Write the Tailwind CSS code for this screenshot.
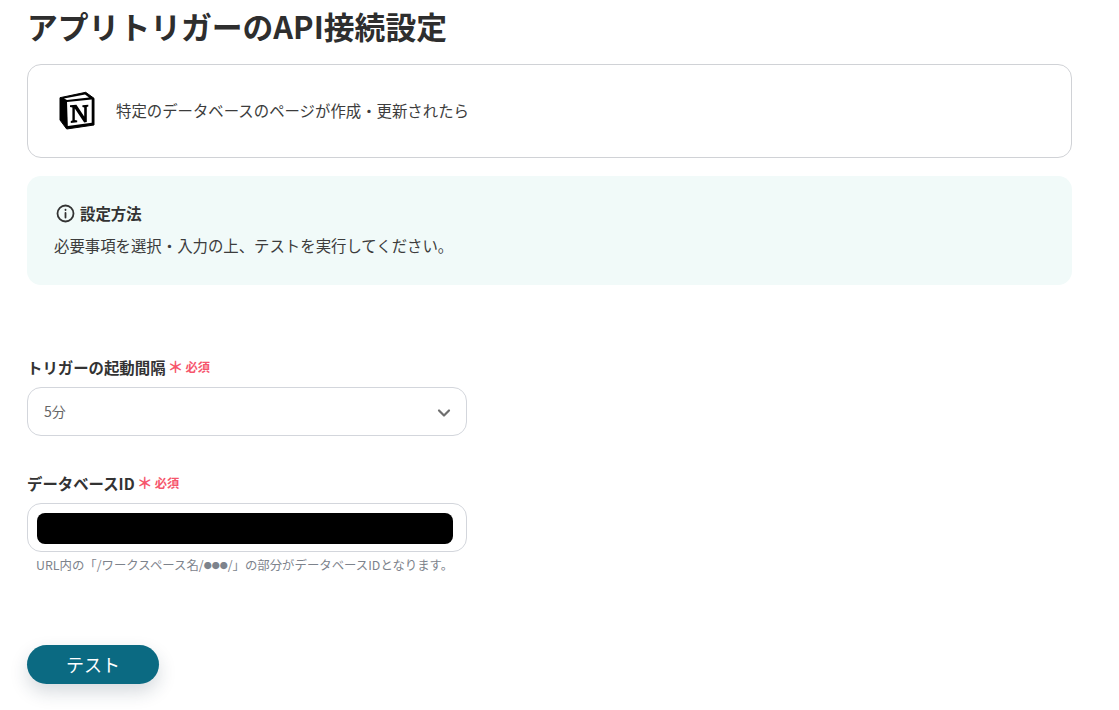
<!DOCTYPE html>
<html lang="ja">

<head>
    <meta charset="UTF-8">
    <title>アプリトリガーのAPI接続設定</title>
    <script src="https://cdn.jsdelivr.net/npm/@tailwindcss/browser@4"></script>
</head>

<body class="bg-white overflow-hidden font-['Noto_Sans_CJK_JP','Noto_Sans',sans-serif] text-[#333]">
    <div class="h-[710px] w-[1119px] overflow-hidden pl-[27px]">
        <h1 class="h-[56px] pt-[4px] text-[30.8px] leading-[44px] font-bold text-[#2e2e2e]">アプリトリガーのAPI接続設定</h1>

        <!-- trigger card -->
        <div class="mt-[8px] flex h-[94px] w-[1045px] items-center rounded-[14px] border border-[#d0d2d6] pl-[31px]">
            <svg class="h-[40px] w-[37px] shrink-0" viewBox="0 0 37 40">
                <path d="M1 6.7 L26.7 1.3 L35 7.3 V34 L7.7 38 L1 29 Z" fill="#000" stroke="#000" stroke-width="1" stroke-linejoin="round"/>
                <path d="M5 7.5 L26 3.6 L30 6.6 L8 9 Z" fill="#fff"/>
                <path d="M8 10.9 L32.7 8.6 V31.7 L8.8 35 Z" fill="#fff"/>
                <path d="M11 14.2 L17.4 13.8 L25.2 25.4 V16.4 L23.4 16 V14.2 L29.3 13.7 V15.5 L27.8 15.9 V31 L25.2 31.4 L15.8 17.6 V28.9 L18.2 29.5 V31.3 L11.8 31.9 V30.1 L13.4 29.5 V16.4 L11 16 Z" fill="#000"/>
            </svg>
            <p class="ml-[20px] -mt-[2px] text-[15.4px] leading-[22px] text-[#3c3c3c]">特定のデータベースのページが作成・更新されたら</p>
        </div>

        <!-- how to -->
        <div class="mt-[18px] h-[109px] w-[1045px] rounded-[14px] bg-[#f1faf9] pl-[27px] pt-[26px]">
            <div class="flex h-[22px] items-center">
                <svg class="ml-[2px] h-[19px] w-[19px]" viewBox="0 0 19 19" fill="none" stroke="#333" stroke-width="1.8" stroke-linecap="round">
                    <circle cx="9.5" cy="9.5" r="8"/>
                    <path d="M9.5 9v4.5"/>
                    <path d="M9.5 5.6v.4"/>
                </svg>
                <span class="ml-[5px] text-[15.4px] leading-[22px] font-bold text-[#333]">設定方法</span>
            </div>
            <p class="mt-[10px] text-[15.4px] leading-[22px] text-[#3c3c3c]">必要事項を選択・入力の上、テストを実行してください。</p>
        </div>

        <!-- interval -->
        <div class="mt-[70px] flex h-[24px] items-center">
            <span class="text-[15.4px] leading-[24px] font-bold text-[#333]">トリガーの起動間隔</span>
            <span class="ml-[2px] text-[12.3px] leading-[24px] font-bold text-[#f6566c]"><span class="mr-[2px] inline-block align-[-1px] text-[16px] leading-[16px]">＊</span>必須</span>
        </div>
        <div class="mt-[8px] flex h-[49px] w-[440px] items-center justify-between rounded-[14px] border border-[#d3d6dc] pl-[16px] pr-[15px]">
            <span class="-mt-[2px] text-[14px] leading-[20px] text-[#666]">5分</span>
            <svg class="mt-[2px] h-[12px] w-[14px]" viewBox="0 0 14 12" fill="none" stroke="#6f6f6f" stroke-width="2.2" stroke-linecap="round" stroke-linejoin="round">
                <path d="M2 3.5 L7 8.5 L12 3.5"/>
            </svg>
        </div>

        <!-- database id -->
        <div class="mt-[35px] flex h-[24px] items-center">
            <span class="text-[15.4px] leading-[24px] font-bold text-[#333]">データベースID</span>
            <span class="ml-[2px] text-[12.3px] leading-[24px] font-bold text-[#f6566c]"><span class="mr-[2px] inline-block align-[-1px] text-[16px] leading-[16px]">＊</span>必須</span>
        </div>
        <div class="mt-[8px] flex h-[49px] w-[440px] items-center rounded-[14px] border border-[#d3d6dc] pl-[9px]">
            <div class="mt-[2px] h-[31px] w-[416px] rounded-[8px] bg-black"></div>
        </div>
        <p class="mt-[4px] pl-[9px] text-[12.4px] leading-[18px] text-[#7d838c]">URL内の「/ワークスペース名/<span class="align-[1px] text-[8px]">●●●</span>/」の部分がデータベースIDとなります。</p>

        <button type="button" class="mt-[70px] block h-[39px] w-[132px] rounded-full bg-[#0b6a82] text-[18px] leading-[39px] text-white shadow-[0_8px_18px_rgba(30,50,70,0.18)]">テスト</button>
    </div>
</body>

</html>
